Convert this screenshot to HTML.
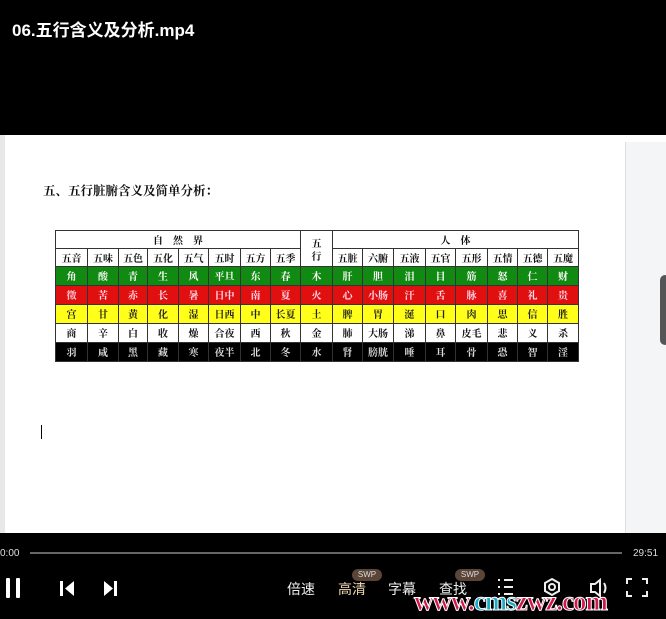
<!DOCTYPE html>
<html><head><meta charset="utf-8"><style>
*{margin:0;padding:0;box-sizing:border-box}
body{width:666px;height:619px;background:#000;position:relative;overflow:hidden;font-family:"Liberation Sans","Noto Sans CJK SC",sans-serif}
.title{position:absolute;left:12px;top:16px;color:#fff;font-size:17px;font-weight:bold}
.doc{position:absolute;left:0;top:135px;width:666px;height:398px;background:#fff}
.lstrip{position:absolute;left:0;top:135px;width:5px;height:398px;background:#e8e8e8}
.rpanel{position:absolute;left:625px;top:142px;width:41px;height:391px;background:#f4f5f7;border-left:1px solid #e0e0e0}
.knob{position:absolute;left:660px;top:275px;width:10px;height:70px;background:#555;border-radius:7px}
.h{position:absolute;left:43px;top:181px;font-family:"Liberation Serif","Noto Serif CJK SC",serif;font-size:12.5px;font-weight:bold;color:#111}
table{position:absolute;left:55px;top:230px;border-collapse:collapse;font-family:"Noto Serif CJK SC",serif;font-size:10px;font-weight:bold;table-layout:fixed}
td{border:1px solid #333;text-align:center;height:19px;padding:0;line-height:16px}
tr.w1 td,tr.w2 td{height:18px}
tr.g td{background:#118a11;color:#fff}
tr.r td{background:#e01010;color:#fde}
tr.y td{background:#ffff1a;color:#222}
tr.w td,tr.w1 td,tr.w2 td{background:#fff;color:#111}
tr.k td{background:#000;color:#ddd}
.bar{position:absolute;left:30px;top:552px;width:592px;height:2px;background:#666}
.t{position:absolute;color:#ddd;font-size:10px;top:548px}
.c{position:absolute;color:#eee;font-size:14px;top:579px}
.swp{position:absolute;top:569px;width:30px;height:12px;border-radius:6px;background:#5a4538;color:#ddd;font-size:8px;text-align:center;line-height:12px}
.wm{position:absolute;left:414px;top:586px;font-family:"Liberation Serif",serif;font-weight:bold;font-size:27px;color:#d0184a;letter-spacing:-1px;-webkit-text-stroke:1px #fff}
</style></head><body>
<div class="title">06.五行含义及分析.mp4</div>
<div class="doc"></div><div class="lstrip"></div>
<div class="rpanel"></div><div class="knob"></div>
<div class="h">五、五行脏腑含义及简单分析：</div>
<table>
<colgroup><col style="width:32px"><col style="width:31px"><col style="width:29px"><col style="width:31px"><col style="width:30px"><col style="width:32px"><col style="width:30px"><col style="width:30px"><col style="width:32px"><col style="width:30px"><col style="width:31px"><col style="width:32px"><col style="width:30px"><col style="width:32px"><col style="width:30px"><col style="width:30px"><col style="width:31px"></colgroup>
<tr class="w1"><td colspan="8">自　然　界</td><td rowspan="2" style="line-height:13px">五<br>行</td><td colspan="8">人　体</td></tr>
<tr class="w2"><td>五音</td><td>五味</td><td>五色</td><td>五化</td><td>五气</td><td>五时</td><td>五方</td><td>五季</td><td>五脏</td><td>六腑</td><td>五液</td><td>五官</td><td>五形</td><td>五情</td><td>五德</td><td>五魔</td></tr>
<tr class="g"><td>角</td><td>酸</td><td>青</td><td>生</td><td>风</td><td>平旦</td><td>东</td><td>春</td><td>木</td><td>肝</td><td>胆</td><td>泪</td><td>目</td><td>筋</td><td>怒</td><td>仁</td><td>财</td></tr>
<tr class="r"><td>徵</td><td>苦</td><td>赤</td><td>长</td><td>暑</td><td>日中</td><td>南</td><td>夏</td><td>火</td><td>心</td><td>小肠</td><td>汗</td><td>舌</td><td>脉</td><td>喜</td><td>礼</td><td>贵</td></tr>
<tr class="y"><td>宫</td><td>甘</td><td>黄</td><td>化</td><td>湿</td><td>日西</td><td>中</td><td>长夏</td><td>土</td><td>脾</td><td>胃</td><td>涎</td><td>口</td><td>肉</td><td>思</td><td>信</td><td>胜</td></tr>
<tr class="w"><td>商</td><td>辛</td><td>白</td><td>收</td><td>燥</td><td>合夜</td><td>西</td><td>秋</td><td>金</td><td>肺</td><td>大肠</td><td>涕</td><td>鼻</td><td>皮毛</td><td>悲</td><td>义</td><td>杀</td></tr>
<tr class="k"><td>羽</td><td>咸</td><td>黑</td><td>藏</td><td>寒</td><td>夜半</td><td>北</td><td>冬</td><td>水</td><td>肾</td><td>膀胱</td><td>唾</td><td>耳</td><td>骨</td><td>恐</td><td>智</td><td>淫</td></tr>
</table>
<div style="position:absolute;left:41px;top:425px;width:1px;height:14px;background:#000"></div>
<div class="t" style="left:0">0:00</div><div class="bar"></div><div class="t" style="left:633px">29:51</div>
<div style="position:absolute;left:6px;top:578px;width:4px;height:20px;background:#fff;border-radius:1px"></div>
<div style="position:absolute;left:16px;top:578px;width:4px;height:20px;background:#fff;border-radius:1px"></div>
<svg style="position:absolute;left:58px;top:580px" width="62" height="17"><rect x="2" y="1" width="3" height="15" fill="#fff"/><path d="M16 1 L7 8.5 L16 16Z" fill="#fff"/><path d="M46 1 L55 8.5 L46 16Z" fill="#fff"/><rect x="56" y="1" width="3" height="15" fill="#fff"/></svg>
<div class="c" style="left:287px">倍速</div>
<div class="c" style="left:338px;color:#f0d9b0">高清</div>
<div class="c" style="left:388px">字幕</div>
<div class="c" style="left:439px">查找</div>
<div class="swp" style="left:352px">SWP</div><div class="swp" style="left:455px">SWP</div>
<svg style="position:absolute;left:490px;top:576px" width="170" height="24" fill="none" stroke="#eee" stroke-width="2">
<path d="M8 4h2M14 4h9M8 11h2M14 11h9M8 18h2M14 18h9"/>
<path d="M62 3l7 4v8l-7 4l-7-4V7z"/><circle cx="62" cy="11" r="3"/>
<path d="M101 8h4l5-4v16l-5-4h-4z"/><path d="M114 7q3 5 0 10"/>
<path d="M137 8V3h5M152 3h5v5M157 15v5h-5M142 20h-5v-5"/>
</svg>
<div class="wm">www.<span style="color:#1aa9c9">cms</span>zwz.com</div>
</body></html>
